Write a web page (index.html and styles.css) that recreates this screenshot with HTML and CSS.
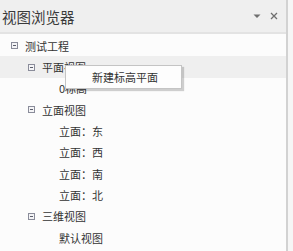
FILE: index.html
```html
<!DOCTYPE html>
<html lang="zh-CN">
  <head>
    <meta charset="UTF-8" />
    <title>视图浏览器</title>
    <link rel="stylesheet" href="styles.css">
  </head>
  <body>
    <div class="panel">
      <div class="header">
        <span class="title">视图浏览器</span>
        <div class="tools">
          <svg class="tool" width="8" height="8" viewBox="0 0 8 8">
            <path d="M0.5 2.5 L7.5 2.5 L4 6 Z" fill="#6f6f6f" />
          </svg>
          <svg class="tool" width="8" height="8" viewBox="0 0 8 8">
            <path d="M1 1 L7 7 M7 1 L1 7" stroke="#6f6f6f" stroke-width="1.3" />
          </svg>
        </div>
      </div>

      <div class="tree">
        <div class="row level-0"><span class="toggle"></span>测试工程</div>
        <div class="row level-1 hover"><span class="toggle"></span>平面视图</div>
        <div class="row level-2">0标高</div>
        <div class="row level-1"><span class="toggle"></span>立面视图</div>
        <div class="row level-2">立面：东</div>
        <div class="row level-2">立面：西</div>
        <div class="row level-2">立面：南</div>
        <div class="row level-2">立面：北</div>
        <div class="row level-1"><span class="toggle"></span>三维视图</div>
        <div class="row level-2">默认视图</div>
      </div>

      <div class="menu">
        <div class="menu-item">新建标高平面</div>
      </div>
    </div>
  </body>
</html>
```

FILE: styles.css
```css
body {
  margin: 0;
  width: 293px;
  height: 251px;
  overflow: hidden;
  background-color: #f6f6f6;
  font-family: "Noto Sans CJK SC", "Noto Sans", sans-serif;
  color: #333333;
}

.panel {
  position: relative;
  width: 286px;
  height: 251px;
  border-right: 2px solid #d2d2d2;
  background-color: #fcfcfc;
}

.header {
  height: 32px;
  display: flex;
  align-items: center;
  justify-content: space-between;
  padding-left: 2px;
  padding-right: 8px;
  background-color: #efefef;
  border-bottom: 2px solid #e3e3e3;
}

.title {
  font-size: 14.5px;
  color: #3a3a3a;
}

.tools {
  display: flex;
  align-items: center;
  gap: 9px;
}

.tree {
  padding-top: 1px;
}

.row {
  height: 21.35px;
  display: flex;
  align-items: center;
  font-size: 11px;
  white-space: nowrap;
}

.row.hover {
  background-color: #efefef;
}

.level-0 {
  padding-left: 11px;
}

.level-1 {
  padding-left: 28px;
}

.level-2 {
  padding-left: 59px;
}

.toggle {
  position: relative;
  box-sizing: border-box;
  width: 7px;
  height: 7px;
  margin-right: 7px;
  border: 1px solid #8a8c9a;
  background-color: #f4f4f6;
}

.toggle::after {
  content: "";
  position: absolute;
  left: 1px;
  top: 2px;
  width: 3px;
  height: 1px;
  background-color: #5c5e6c;
}

.menu {
  position: absolute;
  left: 65px;
  top: 65px;
  width: 117px;
  height: 24px;
  box-sizing: border-box;
  border: 1px solid #c4c4c4;
  background-color: #fdfdfd;
  box-shadow: 2px 2px 1px rgba(0, 0, 0, 0.18);
  display: flex;
  align-items: center;
}

.menu-item {
  padding-left: 26px;
  font-size: 11px;
  color: #333333;
}
```
